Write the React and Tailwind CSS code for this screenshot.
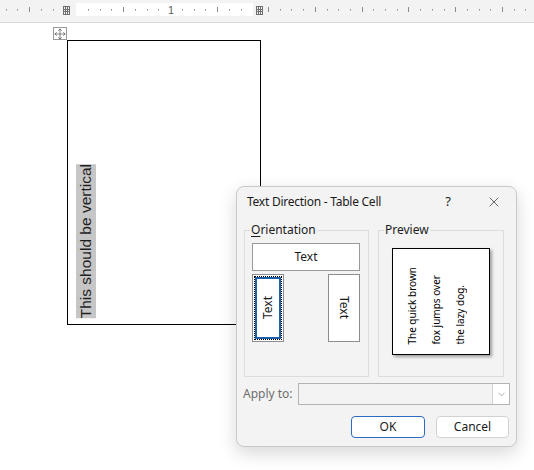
import React from 'react';
import { Move, X, ChevronDown } from 'lucide-react';

// ruler tick positions (px)
const STEP = 11.75;
const ORIGIN = 76;

const GridMark = ({ x }) => (
  <g stroke="#6f6f6f" strokeWidth="1" shapeRendering="crispEdges">
    {[0, 2, 4, 6].map((d) => (
      <line key={'v' + d} x1={x + d + 0.5} y1={6} x2={x + d + 0.5} y2={14} />
    ))}
    {[0, 2.5, 5, 7.5].map((d) => (
      <line key={'h' + d} x1={x} y1={6.5 + d} x2={x + 7} y2={6.5 + d} />
    ))}
  </g>
);

const Ruler = () => {
  const marks = [];
  // left grey part + white part
  for (let i = -6; i <= 14; i++) {
    const x = Math.round(ORIGIN + i * STEP);
    if (i === 0 || i === -1 || i === 8) continue;
    const long = i % 4 === 0;
    marks.push({ x, long });
  }
  // right grey part
  for (let j = 0; j < 24; j++) {
    const x = Math.round(268 + j * 11.7);
    if (x > 532) break;
    marks.push({ x, long: j % 4 === 0 });
  }
  return (
    <div className="h-[23px] bg-[#f3f3f3] border-b border-[#dadada]">
      <svg width="534" height="22" className="block">
        <rect x="76" y="3" width="177" height="13" fill="#ffffff" />
        {marks.map((m, i) =>
          m.long ? (
            <rect key={i} x={m.x} y={7} width={1} height={5} fill="#8a8a8a" />
          ) : (
            <rect key={i} x={m.x} y={9} width={1} height={1.5} fill="#8a8a8a" />
          )
        )}
        <text x="171" y="13.5" fontSize="10" textAnchor="middle" fill="#555" fontFamily="Liberation Sans, sans-serif">
          1
        </text>
        <GridMark x={63} />
        <GridMark x={256} />
      </svg>
    </div>
  );
};

const VText = ({ children, up = true, className = '' }) => (
  <span className={`[writing-mode:vertical-rl] ${up ? 'rotate-180' : ''} ${className}`}>{children}</span>
);

const TextDirectionDialog = () => (
  <div className="absolute left-[236px] top-[186px] w-[281px] h-[261px] rounded-[8px] bg-[#f3f3f3] border border-[#c9c9c9] shadow-[0_6px_18px_rgba(0,0,0,0.16)] font-['Noto_Sans','Open_Sans',sans-serif] text-[12px] text-[#1b1b1b]">
    {/* Title bar */}
    <div className="h-[29px] flex items-center pl-[10px] pr-[12px]">
      <span className="flex-1 leading-[16px] tracking-[-0.25px]">Text Direction - Table Cell</span>
      <span className="w-[20px] text-center text-[13px]">?</span>
      <span className="w-[20px] ml-[26px] flex justify-center">
        <X size={16} strokeWidth={1} />
      </span>
    </div>

    {/* Groups */}
    <div className="mt-[6px] pl-[7px] flex gap-[9px]">
      <fieldset className="w-[125px] h-[155px] border border-[#dcdcdc] m-0 p-0">
        <legend className="ml-[5px] px-[1px] leading-[16px]">
          <span className="underline underline-offset-2">O</span>rientation
        </legend>
        <div className="pt-[5px] pl-[7px]">
          <div className="w-[108px] h-[28px] bg-white border border-[#9a9a9a] flex items-center justify-center">
            Text
          </div>
          <div className="mt-[3px] flex justify-between w-[108px]">
            <div className="w-[32px] h-[68px] border border-[#8c8c8c] p-[1px] bg-white">
              <div className="h-full border border-dotted border-black">
                <div className="h-full border-[2px] border-[#1d5fa8] bg-white flex items-center justify-center">
                  <VText>Text</VText>
                </div>
              </div>
            </div>
            <div className="w-[32px] h-[68px] border border-[#8c8c8c] bg-white flex items-center justify-center">
              <VText up={false}>Text</VText>
            </div>
          </div>
        </div>
      </fieldset>

      <fieldset className="w-[126px] h-[155px] border border-[#dcdcdc] m-0 p-0">
        <legend className="ml-[5px] px-[1px] leading-[16px]">Preview</legend>
        <div className="pt-[10px] pl-[13px]">
          <div className="w-[98px] h-[107px] bg-white border border-black shadow-[2px_2px_3px_rgba(0,0,0,0.35)] flex items-end pl-[7px] pb-[9px]">
            <VText className="text-[10px] leading-[24px] text-black">
              The quick brown
              <br />
              fox jumps over
              <br />
              the lazy dog.
            </VText>
          </div>
        </div>
      </fieldset>
    </div>

    {/* Apply to */}
    <div className="mt-[6px] pl-[6px] flex items-center">
      <span className="w-[55px] text-[#6e6e6e]">Apply to:</span>
      <div className="w-[212px] h-[22px] border border-[#b4b4b4] bg-[#f3f3f3] flex justify-end">
        <div className="w-[17px] h-full bg-white border-l border-[#d4d4d4] flex items-center justify-center">
          <ChevronDown size={11} strokeWidth={1.2} className="text-[#6a6a6a]" />
        </div>
      </div>
    </div>

    {/* Buttons */}
    <div className="mt-[11px] pr-[7px] flex justify-end gap-[11px]">
      <button className="w-[74px] h-[22px] rounded-[4px] bg-white border border-[#2b6cc0] text-[12px]">
        OK
      </button>
      <button className="w-[73px] h-[22px] rounded-[4px] bg-white border border-[#d2d2d2] text-[12px]">
        Cancel
      </button>
    </div>
  </div>
);

const App = () => {
  return (
    <div className="w-[534px] h-[470px] bg-white relative overflow-hidden select-none">
      <Ruler />

      {/* Table move handle */}
      <div className="ml-[53px] mt-[4px] w-[14px] h-[13px] border border-[#9b9b9b] bg-white flex items-center justify-center">
        <Move size={12} strokeWidth={1.3} className="text-[#444]" />
      </div>

      {/* Table cell */}
      <div className="ml-[67px] w-[194px] h-[285px] border border-black flex items-end pl-[8px] pb-[6px]">
        <VText className="bg-[#c6c6c6] text-[15.5px] leading-[20px] text-[#1f1f1f] font-['Liberation_Sans',Arial,sans-serif]">
          This should be vertical
        </VText>
      </div>

      <TextDirectionDialog />
    </div>
  );
};

export default App;
